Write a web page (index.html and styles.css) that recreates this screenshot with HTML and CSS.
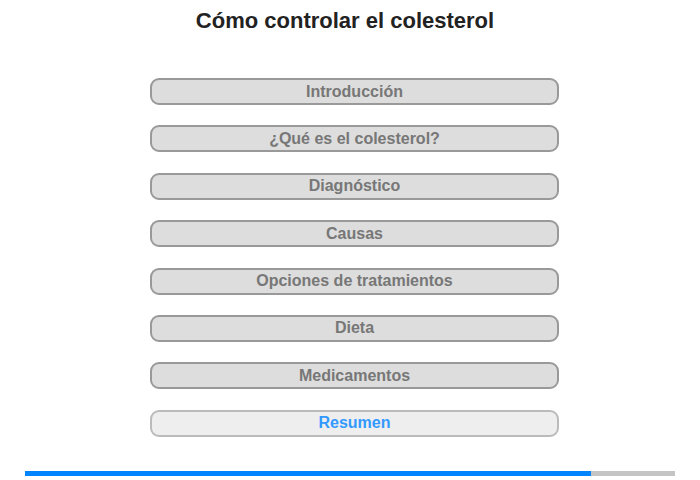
FILE: index.html
```html
<!DOCTYPE html>
<html lang="es">
<head>
    <meta charset="UTF-8">
    <meta name="viewport" content="width=device-width, initial-scale=1.0">
    <title>Cómo controlar el colesterol</title>
    <link rel="stylesheet" href="styles.css">
</head>
<body>
    <div class="page">
        <h1 class="title">Cómo controlar el colesterol</h1>

        <nav class="menu">
            <button class="item">Introducción</button>
            <button class="item">¿Qué es el colesterol?</button>
            <button class="item">Diagnóstico</button>
            <button class="item">Causas</button>
            <button class="item">Opciones de tratamientos</button>
            <button class="item">Dieta</button>
            <button class="item">Medicamentos</button>
            <button class="item current">Resumen</button>
        </nav>

        <div class="progress">
            <div class="progress-fill" style="width: 87%;"></div>
        </div>
    </div>
</body>
</html>
```

FILE: styles.css
```css
body {
    font-family: "Liberation Sans", Arial, sans-serif;
    margin: 0;
    background: #fff;
}

.page {
    width: 700px;
    height: 480px;
    display: flex;
    flex-direction: column;
    align-items: center;
}

.title {
    font-size: 22px;
    font-weight: bold;
    color: #222;
    margin: 8px 10px 0 0;
    line-height: 26px;
}

.menu {
    margin: 44px 0 0 9px;
    width: 409px;
    display: flex;
    flex-direction: column;
    gap: 20.4px;
}

.item {
    height: 27px;
    background-color: #ddd;
    border: 2px solid #999;
    border-radius: 9px;
    font-family: inherit;
    font-size: 16px;
    font-weight: bold;
    color: #777;
    padding: 0;
    cursor: pointer;
}

.item.current {
    background-color: #eee;
    border-color: #bbb;
    color: #3399ff;
}

.progress {
    margin-top: 34px;
    width: 650px;
    height: 5px;
    background: #c4c4c4;
}

.progress-fill {
    height: 100%;
    background: #0084ff;
}
```
